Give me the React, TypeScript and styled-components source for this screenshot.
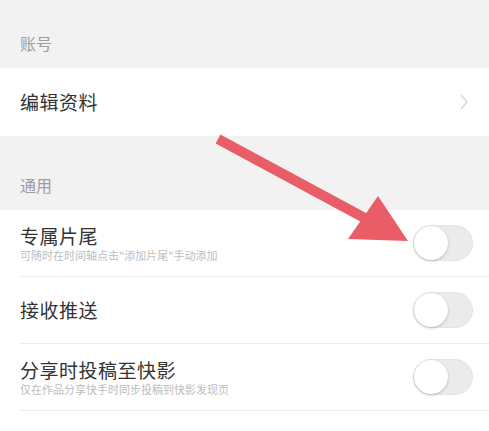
import React from "react";
import styled, { createGlobalStyle } from "styled-components";

const GlobalStyle = createGlobalStyle`
  html, body {
    margin: 0;
    padding: 0;
    background: #f2f2f2;
  }
  body {
    font-family: "Noto Sans CJK SC", "Noto Sans", sans-serif;
    overflow: hidden;
  }
`;

interface SwitchRow {
  title: string;
  hint?: string;
}

const generalRows: SwitchRow[] = [
  { title: "专属片尾", hint: "可随时在时间轴点击\"添加片尾\"手动添加" },
  { title: "接收推送" },
  { title: "分享时投稿至快影", hint: "仅在作品分享快手时同步投稿到快影发现页" },
];

const Toggle: React.FC = () => (
  <Track>
    <Knob />
  </Track>
);

const App: React.FC = () => {
  return (
    <Page>
      <GlobalStyle />
      <SectionHeader $height={68}>账号</SectionHeader>
      <Group>
        <LinkRow>
          <Title>编辑资料</Title>
          <Chevron viewBox="0 0 10 18">
            <path d="M2 2 L8 9 L2 16" fill="none" stroke="#d9d9d9" strokeWidth="1.6" />
          </Chevron>
        </LinkRow>
      </Group>
      <SectionHeader $height={74}>通用</SectionHeader>
      <Group $fill>
        {generalRows.map((row) => (
          <Row key={row.title}>
            <TextBlock>
              <Title>{row.title}</Title>
              {row.hint && <Hint>{row.hint}</Hint>}
            </TextBlock>
            <Toggle />
          </Row>
        ))}
      </Group>

      {/* red annotation arrow drawn over the screenshot */}
      <Arrow viewBox="0 0 489 431">
        <line x1="218" y1="139" x2="372" y2="222" stroke="#e85d66" strokeWidth="10" />
        <polygon points="348,239 378,196 408,241" fill="#e85d66" />
      </Arrow>
    </Page>
  );
};

const Page = styled.div`
  position: relative;
  width: 489px;
  height: 431px;
  background: #f2f2f2;
  overflow: hidden;
`;

const SectionHeader = styled.div<{ $height: number }>`
  height: ${(p) => p.$height}px;
  box-sizing: border-box;
  display: flex;
  align-items: flex-end;
  padding: 0 20px 14px;
  font-size: 16px;
  line-height: 22px;
  color: #9d9d9d;
`;

const Group = styled.div<{ $fill?: boolean }>`
  background: #fff;
  ${(p) => p.$fill && "height: 300px;"}
`;

const LinkRow = styled.div`
  height: 68px;
  display: flex;
  align-items: center;
  justify-content: space-between;
  padding: 0 20px 0 20px;
`;

const Row = styled.div`
  height: 66px;
  display: flex;
  align-items: center;
  justify-content: space-between;
  margin-left: 20px;
  padding-right: 16px;
  border-bottom: 1px solid #ededed;
`;

const TextBlock = styled.div`
  display: flex;
  flex-direction: column;
`;

const Title = styled.div`
  font-size: 19px;
  line-height: 24px;
  color: #333;
  letter-spacing: 0.5px;
`;

const Hint = styled.div`
  font-size: 11px;
  line-height: 15px;
  color: #bdbdbd;
`;

const Chevron = styled.svg`
  width: 10px;
  height: 18px;
`;

const Track = styled.div`
  width: 60px;
  height: 36px;
  border-radius: 18px;
  background: #ebebeb;
  box-sizing: border-box;
  border: 1px solid #e4e4e4;
  position: relative;
`;

const Knob = styled.div`
  position: absolute;
  left: 0;
  top: 0;
  width: 34px;
  height: 34px;
  border-radius: 50%;
  background: #fff;
  box-shadow: 0 1px 3px rgba(0, 0, 0, 0.22);
`;

const Arrow = styled.svg`
  position: absolute;
  left: 0;
  top: 0;
  width: 489px;
  height: 431px;
  pointer-events: none;
`;

export default App;
